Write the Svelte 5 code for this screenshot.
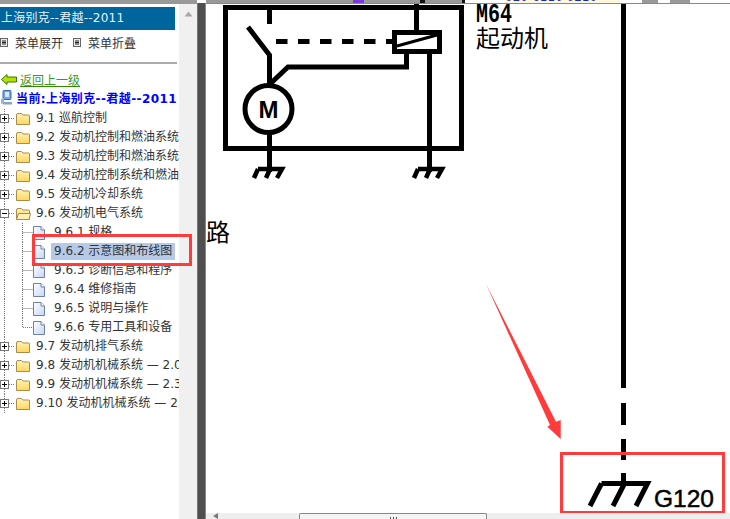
<script>
	const branches = [
		{ label: '9.1 巡航控制' },
		{ label: '9.2 发动机控制和燃油系统' },
		{ label: '9.3 发动机控制和燃油系统' },
		{ label: '9.4 发动机控制系统和燃油系统' },
		{ label: '9.5 发动机冷却系统' },
		{
			label: '9.6 发动机电气系统',
			open: true,
			children: ['9.6.1 规格', '9.6.2 示意图和布线图', '9.6.3 诊断信息和程序', '9.6.4 维修指南', '9.6.5 说明与操作', '9.6.6 专用工具和设备']
		},
		{ label: '9.7 发动机排气系统' },
		{ label: '9.8 发动机机械系统 — 2.0L' },
		{ label: '9.9 发动机机械系统 — 2.3L' },
		{ label: '9.10 发动机机械系统 — 2.4L' }
	];
</script>

{#snippet menuIcon()}
	<svg class="menu-icon" width="8" height="9" viewBox="0 0 8 9">
		<rect x="0.5" y="0.5" width="7" height="8" fill="#eee" stroke="#666" />
		<path d="M2 3h4M2 4.5h4M2 6h4" stroke="#222" />
	</svg>
{/snippet}

{#snippet folder(open)}
	<svg class="folder" width="16" height="14" viewBox="0 0 16 14">
		<defs>
			<linearGradient id="manila" x1="0" y1="0" x2="0" y2="1">
				<stop offset="0" stop-color="#fff3b8" />
				<stop offset="1" stop-color="#ffd65c" />
			</linearGradient>
		</defs>
		<path d="M1.5 3 Q1.5 1.5 3 1.5 H6.5 L8 3 H13.5 Q14.5 3 14.5 4 V12.5 H1.5 Z" fill="url(#manila)" stroke="#a88c48" />
		{#if open}
			<path d="M1.5 12.5 L3.5 6.5 H15.5 L14 12.5 Z" fill="#fff0b4" stroke="#a88c48" />
		{/if}
	</svg>
{/snippet}

{#snippet doc()}
	<svg class="doc" width="12" height="14" viewBox="0 0 12 14">
		<defs>
			<linearGradient id="paper" x1="0" y1="0" x2="1" y2="1">
				<stop offset="0" stop-color="#ffffff" />
				<stop offset="1" stop-color="#c4d6f4" />
			</linearGradient>
		</defs>
		<path d="M0.5 0.5 H8 L11.5 4 V13.5 H0.5 Z" fill="url(#paper)" stroke="#6c80a8" />
		<path d="M8 0.5 V4 H11.5" fill="#fff" stroke="#6c80a8" />
	</svg>
{/snippet}

<div class="window">
	<aside class="sidebar">
		<div class="nav">
			<div class="title">上海别克--君越--2011</div>
			<div class="menu">
				<span class="menu-item">{@render menuIcon()}菜单展开</span>
				<span class="menu-item">{@render menuIcon()}菜单折叠</span>
			</div>
			<a class="back" href="#top">
				<svg width="16" height="11" viewBox="0 0 16 11">
					<path d="M0.5 5.5 L6 0.5 V3 H15.5 V8 H6 V10.5 Z" fill="#b6e000" stroke="#2f7d00" />
				</svg>
				<span>返回上一级</span>
			</a>
			<div class="current">
				<svg width="13" height="15" viewBox="0 0 13 15">
					<rect x="3" y="0.5" width="8" height="9" rx="1" fill="#6ea6e8" stroke="#3a6ab0" />
					<rect x="5" y="2" width="4" height="5" fill="#d4e8fc" />
					<path d="M1 9 L4 8 V13 L1 14 Z" fill="#9ab4d8" />
					<path d="M3 12 H12 V14.5 H3 Z" fill="#8aa0c0" />
				</svg>
				<b>当前:上海别克--君越--2011</b>
			</div>
			<ul class="tree">
				{#each branches as branch}
					<li class="row">
						<svg class="toggle" width="15" height="19" viewBox="0 0 15 19">
							<path d="M4.5 0V19M9 9.5H15" stroke="#777" stroke-dasharray="1 1" />
							<rect x="0.5" y="5.5" width="8" height="8" fill="#fff" stroke="#777" />
							<path d="M2 9.5H7" stroke="#000" />
							{#if !branch.open}<path d="M4.5 7V12" stroke="#000" />{/if}
						</svg>
						{@render folder(branch.open)}
						<span class="label">{branch.label}</span>
					</li>
					{#if branch.children}
						{#each branch.children as child, i}
							<li class="row child">
								<svg class="elbow" width="33" height="19" viewBox="0 0 33 19">
									<path d="M4.5 0V19" stroke="#777" stroke-dasharray="1 1" />
									<path d={i === branch.children.length - 1 ? 'M22.5 0V9.5H33' : 'M22.5 0V19M22.5 9.5H33'} fill="none" stroke="#777" stroke-dasharray="1 1" />
								</svg>
								{@render doc()}
								<span class="label" class:selected={i === 1}>{child}</span>
							</li>
						{/each}
					{/if}
				{/each}
			</ul>
		</div>
		<div class="scrollbar">
			<svg width="9" height="6" viewBox="0 0 9 6"><path d="M4.5 0.5 L8.5 5.5 H0.5 Z" fill="#a8a8a8" /></svg>
		</div>
		<div class="callout"></div>
	</aside>

	<div class="splitter"></div>

	<main class="content">
		<div class="strip">
			<i class="band"></i><i class="purple"></i><i class="dark"></i><i class="dark second"></i>
			<span class="phone">020-6110 0210</span>
			<i class="shade"></i><i class="shade second"></i>
		</div>
		<div class="canvas">
			<svg class="diagram" width="524" height="519" viewBox="206 0 524 519">
				<g fill="none" stroke="#000" stroke-width="5">
					<rect x="225.5" y="7.5" width="236" height="141" />
					<path d="M269.5 5V24" />
					<path d="M416.5 0V32" />
					<rect x="394.5" y="32.5" width="45" height="19" />
					<path d="M248 27L269.5 55V86" />
					<path d="M270 84L288 67H406.5V51" />
					<circle cx="268.5" cy="109" r="23.5" />
					<path d="M269.5 133V172" />
					<path d="M429.5 51V172" />
					<path d="M258 169H282L277 178M258 169L254 178M270 169L266 178" stroke-width="4.5" />
					<path d="M418 169H442L437 178M418 169L414 178M430 169L426 178" stroke-width="4.5" />
					<path d="M276 41.5H392" stroke-dasharray="11.5 10.5" />
					<path d="M623.5 0V388M623.5 403V425M623.5 439V460M623.5 473V483" />
					<path d="M601.5 483.5H647.5L636 506M601.5 483.5L590 506M624.5 483.5L613 506" />
				</g>
				<path d="M397 46L437 35" stroke="#000" stroke-width="3" />
				<text class="motor" x="268.5" y="118">M</text>
				<text class="code" transform="translate(476 22) scale(1 1.35)">M64</text>
				<text class="cn" x="476" y="47">起动机</text>
				<text class="cn" x="206" y="241">路</text>
				<text class="ground" x="654" y="507">G120</text>
				<path d="M486 284L556 421.7L560.7 420L560.7 439L547.3 426.7L550 425Z" fill="#ff3b3b" />
				<rect x="561.5" y="453.5" width="162" height="59" fill="none" stroke="#ff3b3b" stroke-width="3" />
			</svg>
		</div>
		<div class="hscroll">
			<svg width="5" height="6" viewBox="0 0 5 6"><path d="M0 3L5 0V6Z" fill="#777" /></svg>
			<div class="thumb"><span></span></div>
		</div>
	</main>
</div>

<style>
	:global(body) {
		margin: 0;
		background: #fff;
	}

	.window {
		display: flex;
		width: 730px;
		height: 519px;
		overflow: hidden;
		font-family: 'DejaVu Sans', 'Noto Sans CJK SC', sans-serif;
		font-size: 12px;
		color: #333;
	}

	.sidebar {
		position: relative;
		display: flex;
		width: 197px;
		flex: none;
		border-top: 4px solid #999;
		box-sizing: border-box;
	}

	.nav {
		width: 179px;
		flex: none;
		overflow: hidden;
		padding-top: 3px;
	}

	.title {
		width: 175px;
		height: 23px;
		padding-left: 1px;
		box-sizing: border-box;
		background: #00659c;
		color: #e8f2f8;
		line-height: 23px;
		letter-spacing: 0.25px;
		white-space: nowrap;
	}

	.menu {
		display: flex;
		gap: 10px;
		height: 24px;
		padding-bottom: 8px;
		border-bottom: 2px solid #aaa;
		box-sizing: content-box;
		align-items: center;
		margin-bottom: 5px;
		margin-right: 2px;
		white-space: nowrap;
	}

	.menu-item {
		display: flex;
		align-items: center;
		gap: 7px;
	}

	.menu-icon {
		flex: none;
	}

	.back {
		display: flex;
		align-items: center;
		gap: 3px;
		height: 20px;
		padding-left: 1px;
		color: #3c9a1e;
		text-decoration: none;
	}

	.back span {
		text-decoration: underline;
		text-decoration-color: #2f8a00;
	}

	.current {
		display: flex;
		align-items: flex-start;
		gap: 3px;
		height: 20px;
		color: #0000ff;
		white-space: nowrap;
	}

	.current svg {
		flex: none;
		margin-top: 1px;
	}

	.current b {
		font-size: 12px;
		letter-spacing: 0.4px;
	}

	.tree {
		list-style: none;
		margin: 0;
		padding: 0;
	}

	.row {
		display: flex;
		align-items: center;
		height: 19px;
		white-space: nowrap;
	}

	.toggle,
	.elbow,
	.folder,
	.doc {
		flex: none;
	}

	.label {
		margin-left: 5px;
		padding: 1px 0;
		line-height: 15px;
	}

	.child .label {
		margin-left: 9px;
	}

	.child .selected {
		margin-left: 6px;
		padding: 1px 3px;
		background: #b5c9e8;
	}

	.scrollbar {
		width: 18px;
		flex: none;
		background: #f0f0f0;
		display: flex;
		justify-content: center;
		align-items: flex-start;
		padding-top: 7px;
		box-sizing: border-box;
	}

	.callout {
		position: absolute;
		left: 32px;
		top: 230px;
		width: 154px;
		height: 26px;
		border: 3px solid #ff3b3b;
		pointer-events: none;
	}

	.splitter {
		width: 7px;
		flex: none;
		background: #4f4f4f;
		border-left: 1px solid #777;
		border-right: 1px solid #888;
		box-sizing: content-box;
		margin-top: 3px;
	}

	.content {
		position: relative;
		display: flex;
		flex-direction: column;
		flex: 1;
		min-width: 0;
	}

	.strip {
		position: relative;
		z-index: 1;
		height: 3px;
		overflow: hidden;
		background: #fff;
		border-bottom: 1px solid #888;
		flex: none;
	}

	.strip i {
		position: absolute;
		top: 0;
		height: 3px;
	}

	.band {
		left: 0;
		width: 259px;
		background: #999;
	}

	.purple {
		left: 147px;
		width: 11px;
		background: #7a3ad8;
	}

	.dark {
		left: 214px;
		width: 5px;
		background: #111;
	}

	.dark.second {
		left: 256px;
		width: 3px;
	}

	.phone {
		position: absolute;
		left: 299px;
		top: -9px;
		width: 115px;
		background: #fff8dc;
		color: #1a2aa8;
		font-size: 12px;
		line-height: 12px;
		white-space: nowrap;
	}

	.shade {
		left: 436px;
		width: 16px;
		background: #999;
	}

	.shade.second {
		left: 464px;
		width: 20px;
	}

	.canvas {
		position: relative;
		flex: 1;
		background: #fff;
		overflow: hidden;
	}

	.diagram {
		position: absolute;
		left: 0;
		top: -4px;
	}

	.motor {
		font: bold 24px 'Liberation Sans', sans-serif;
		text-anchor: middle;
	}

	.code {
		font: bold 20px 'Liberation Mono', monospace;
	}

	.cn {
		font: 24px 'Noto Sans CJK SC', sans-serif;
	}

	.ground {
		font: 24.5px 'Liberation Sans', sans-serif;
		stroke: #000;
		stroke-width: 0.5px;
	}

	.hscroll {
		position: relative;
		display: flex;
		align-items: flex-end;
		height: 6px;
		flex: none;
		background: #eee;
		padding-left: 7px;
	}

	.thumb {
		position: absolute;
		left: 93px;
		top: 0;
		width: 188px;
		height: 6px;
		background: #f4f4f4;
		border: 1px solid #888;
		border-bottom: 0;
		border-radius: 2px 2px 0 0;
		box-sizing: border-box;
		display: flex;
		justify-content: center;
	}

	.thumb span {
		width: 7px;
		height: 3px;
		margin-top: 3px;
		background: repeating-linear-gradient(90deg, #555 0 1px, transparent 1px 3px);
	}
</style>
